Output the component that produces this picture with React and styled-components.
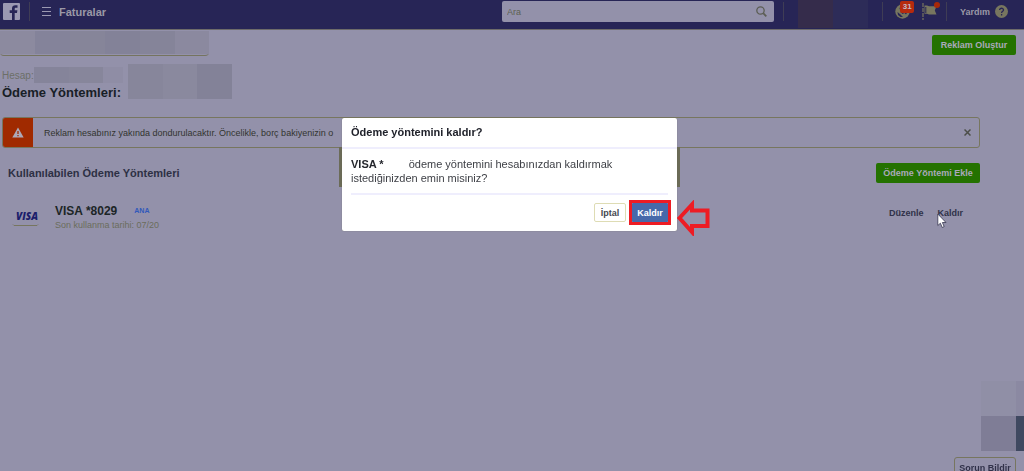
import React from "react";
import styled, { createGlobalStyle } from "styled-components";

const GlobalStyle = createGlobalStyle`
  * {
    box-sizing: border-box;
  }
  body {
    margin: 0;
    background-color: #9391aa;
    color: #2d3142;
    font-family: "Liberation Sans", Arial, sans-serif;
    font-size: 10px;
    overflow: hidden;
  }
  button, input {
    font-family: inherit;
  }
`;

const Page = styled.div`
  min-height: 100vh;
`;
const Navbar = styled.header`
  display: flex;
  align-items: center;
  height: 30px;
  padding: 0 16px 6px 3px;
  background-color: #272556;
  border-bottom: 1px solid #6d6b6a;
`;
const NavLeft = styled.div`
  flex: 1;
  display: flex;
  align-items: center;
`;
const Divider = styled.span`
  width: 1px;
  height: 19px;
  margin: 0 ${(props) => props.$right}px 0 ${(props) => props.$left}px;
  background-color: #3f3d55;
`;
const MenuButton = styled.button`
  display: flex;
  align-items: center;
  gap: 8px;
  padding: 0;
  border: none;
  background: none;
  color: #9b99a6;
  font-size: 11px;
  font-weight: bold;
`;
const SearchBox = styled.label`
  display: flex;
  align-items: center;
  width: 272px;
  height: 21px;
  padding: 0 7px 0 5px;
  border-radius: 2px;
  background-color: #9391aa;
`;
const SearchInput = styled.input`
  flex: 1;
  min-width: 0;
  padding: 0;
  border: none;
  outline: none;
  background: none;
  font-size: 9px;
  &::placeholder {
    color: #5d6151;
    opacity: 1;
  }
`;
const NavRight = styled.div`
  display: flex;
  align-items: center;
  width: 234px;
`;
const Mosaic = styled.div`
  display: flex;
  flex-wrap: wrap;
  width: ${(props) => props.$width}px;
  height: ${(props) => props.$height}px;
`;
const Tile = styled.span`
  flex: ${(props) => props.$size || 1} 1 0;
  background-color: ${(props) => props.$color};
`;
const ProfileArea = styled.div`
  align-self: flex-start;
  height: 24px;
`;
const IconLink = styled.a`
  position: relative;
  display: flex;
  margin-right: ${(props) => props.$gap || 0}px;
`;
const Badge = styled.span`
  position: absolute;
  top: -3px;
  left: 5px;
  width: 14px;
  height: 12px;
  border-radius: 2px;
  background-color: #b62a0d;
  color: #c6b9c6;
  font-size: 8px;
  font-weight: bold;
  line-height: 12px;
  text-align: center;
`;
const Dot = styled.span`
  position: absolute;
  top: -1px;
  right: -3px;
  width: 6px;
  height: 6px;
  border-radius: 50%;
  background-color: #a82808;
`;
const HelpLink = styled.a`
  display: flex;
  align-items: center;
  gap: 5px;
  color: #9b99a6;
  font-size: 9px;
  font-weight: bold;
  text-decoration: none;
`;
const Toolbar = styled.div`
  display: flex;
  justify-content: space-between;
  align-items: flex-start;
  height: 34px;
  padding-right: 8px;
`;
const AccountBox = styled.div`
  padding: 1px 0;
  border-bottom: 1px solid #75745f;
  border-radius: 0 0 4px 4px;
`;
const GreenButton = styled.button`
  height: 20px;
  margin-top: ${(props) => props.$top || 0}px;
  padding: 0;
  width: ${(props) => props.$width}px;
  border: none;
  border-radius: 2px;
  background-color: #247200;
  color: #aaa9bb;
  font-size: 9px;
  font-weight: bold;
  white-space: nowrap;
`;
const TitleBar = styled.div`
  display: flex;
  height: 53px;
  padding-left: 2px;
`;
const TitleText = styled.div`
  width: 126px;
  padding-top: 3px;
`;
const Account = styled.div`
  display: flex;
  align-items: center;
  height: 16px;
  color: #6c6f67;
`;
const Title = styled.h1`
  margin: 2px 0 0;
  color: #182026;
  font-size: 13px;
  line-height: 16px;
`;
const Content = styled.main`
  padding: 0 44px 0 2px;
`;
const Alert = styled.div`
  display: flex;
  align-items: center;
  height: 31px;
  border: 1px solid #77765f;
  border-radius: 3px;
  overflow: hidden;
`;
const AlertIcon = styled.div`
  display: flex;
  align-items: center;
  justify-content: center;
  width: 30px;
  height: 100%;
  background-color: #a02a00;
`;
const AlertText = styled.p`
  flex: 1;
  margin: 0 0 0 11px;
  color: #32342f;
  font-size: 9px;
`;
const CloseButton = styled.button`
  display: flex;
  margin-right: 8px;
  padding: 0;
  border: none;
  background: none;
`;
const SectionHead = styled.div`
  display: flex;
  justify-content: space-between;
  align-items: center;
  height: 20px;
  margin-top: 15px;
  padding-left: 6px;
`;
const SectionTitle = styled.h2`
  margin: 0;
  color: #2d3044;
  font-size: 11px;
`;
const MethodRow = styled.div`
  display: flex;
  align-items: center;
  margin-top: 20px;
  padding: 0 17px 0 10px;
`;
const MethodInfo = styled.div`
  flex: 1;
  margin-left: 16px;
`;
const MethodName = styled.div`
  display: flex;
  align-items: center;
  gap: 17px;
  color: #1c2526;
  font-size: 12px;
  font-weight: bold;
  line-height: 16px;
`;
const Primary = styled.span`
  color: #3159bb;
  font-size: 7px;
`;
const Expiry = styled.div`
  color: #6b6d5c;
  font-size: 9px;
  line-height: 12px;
`;
const Actions = styled.div`
  display: flex;
  gap: 14px;
  margin-bottom: 8px;
`;
const Action = styled.a`
  position: relative;
  color: #303149;
  font-size: 9px;
  font-weight: bold;
  text-decoration: none;
`;
const Pointer = styled.svg`
  position: absolute;
  top: 5px;
  left: 0;
`;
const Dock = styled.div`
  position: fixed;
  right: 0;
  bottom: -7px;
  display: flex;
  flex-direction: column;
  align-items: flex-end;
`;
const ReportButton = styled.button`
  width: 62px;
  height: 21px;
  margin: 6px 8px 0 0;
  padding: 0;
  border: 1px solid #77765f;
  border-radius: 3px;
  background: none;
  color: #303149;
  font-size: 9px;
  font-weight: bold;
  white-space: nowrap;
`;
const Overlay = styled.div`
  position: fixed;
  inset: 0;
  display: flex;
  align-items: flex-start;
  justify-content: center;
  padding: 118px 5px 0 0;
`;
const Dialog = styled.section`
  position: relative;
  width: 335px;
  border-radius: 2px;
  background-color: #fff;
  box-shadow: 0 0 1px #6b6b57;
  &::before {
    content: "";
    position: absolute;
    z-index: -1;
    top: 29px;
    left: -3px;
    right: -3px;
    height: 40px;
    background-color: #6b6b57;
  }
`;
const DialogTitle = styled.h3`
  margin: 0;
  padding: 0 9px;
  border-bottom: 2px solid #efeefd;
  color: #20222b;
  font-size: 11px;
  line-height: 29px;
`;
const DialogText = styled.p`
  margin: 0 9px;
  padding: 8px 0;
  border-bottom: 2px solid #efeefd;
  color: #3d3f45;
  font-size: 11px;
  line-height: 14px;
`;
const CardName = styled.strong`
  margin-right: 22px;
  color: #24262c;
`;
const DialogFooter = styled.div`
  display: flex;
  justify-content: flex-end;
  gap: 5px;
  padding: 8px 8px 9px;
`;
const DialogButton = styled.button`
  position: relative;
  width: ${(props) => (props.$primary ? 38 : 32)}px;
  height: 19px;
  padding: 0;
  border: 1px solid ${(props) => (props.$primary ? "#4769aa" : "#dedcb4")};
  border-radius: 2px;
  background-color: ${(props) => (props.$primary ? "#4769aa" : "#fff")};
  color: ${(props) => (props.$primary ? "#fff" : "#45484f")};
  font-size: 9px;
  font-weight: bold;
`;
const Highlight = styled.span`
  position: absolute;
  inset: -4px -3px;
  border: 3px solid #ed1c24;
`;
const Arrow = styled.svg`
  position: absolute;
  left: 335px;
  bottom: -5px;
`;

const Logo = () => (
  <svg width="17" height="17" viewBox="0 0 17 17" role="img" aria-label="Facebook">
    <rect width="17" height="17" rx="1" fill="#9b99b2" />
    <path
      d="M9 17V10H6.7V7.3H9V5.5C9 3.2 10.4 2.2 12.3 2.2H14.5V4.8H13C12 4.8 11.7 5.2 11.7 6V7.3H14.4L14 10H11.7V17Z"
      fill="#272556"
    />
  </svg>
);

const App = () => {
  return (
    <Page>
      <GlobalStyle />
      <Navbar>
        <NavLeft>
          <Logo />
          <Divider $left={9} $right={12} />
          <MenuButton>
            <svg width="9" height="10" stroke="#9b99b2" strokeWidth="1">
              <path d="M0 .5H9M0 4.5H9M0 8.5H9" />
            </svg>
            Faturalar
          </MenuButton>
        </NavLeft>
        <SearchBox>
          <SearchInput type="text" placeholder="Ara" aria-label="Ara" />
          <svg width="11" height="11" viewBox="0 0 11 11" fill="none" stroke="#5c5e55">
            <circle cx="4.5" cy="4.5" r="3.7" strokeWidth="1.3" />
            <path d="M7.2 7.2L10.3 10.3" strokeWidth="1.8" />
          </svg>
        </SearchBox>
        <NavRight>
          <Divider $left={9} $right={14} />
          <ProfileArea>
            <Mosaic $width={70} $height={28}>
              <Tile $color="#352c4b" />
              <Tile $color="#2d2c58" />
            </Mosaic>
          </ProfileArea>
          <Divider $left={14} $right={13} />
          <IconLink href="#notifications" aria-label="31 bildirim" $gap={12}>
            <svg width="15" height="15" viewBox="0 0 15 15">
              <circle cx="7.5" cy="7.5" r="7.2" fill="#77765f" />
              <path
                d="M5 3L9 2L12 5L12.5 8L11 10.5L9.5 9L7.5 10L5.5 8L6.5 6L4.5 5ZM2.5 8L5.5 10.5L8 13L5.5 13L3 11Z"
                fill="#272556"
              />
            </svg>
            <Badge>31</Badge>
          </IconLink>
          <IconLink href="#pages" aria-label="Sayfalar" $gap={9}>
            <svg width="15" height="17" viewBox="0 0 15 17">
              <path d="M1 0V17" stroke="#77765f" strokeWidth="1.2" strokeDasharray="4 1" />
              <path d="M2.5 2.5H5L7 3.2H14.5L12.8 7.5L14.5 11.5H7L5 10.8H2.5Z" fill="#77765f" />
              <path d="M3.8 4V10" stroke="#272556" strokeWidth="1" />
            </svg>
            <Dot />
          </IconLink>
          <Divider $left={0} $right={13} />
          <HelpLink href="#help">
            Yardım
            <svg width="13" height="13" viewBox="0 0 13 13">
              <circle cx="6.5" cy="6.5" r="6.5" fill="#77765f" />
              <path
                d="M4.6 5C4.6 2.6 8.5 2.7 8.5 4.9C8.5 6.3 6.6 6.3 6.6 7.9M6.6 9V10.4"
                fill="none"
                stroke="#272556"
                strokeWidth="1.3"
              />
            </svg>
          </HelpLink>
        </NavRight>
      </Navbar>

      <Toolbar>
        <AccountBox>
          <Mosaic $width={209} $height={23}>
            <Tile $size={35} $color="#8c8a9f" />
            <Tile $size={35} $color="#84839a" />
            <Tile $size={35} $color="#868599" />
            <Tile $size={35} $color="#838298" />
            <Tile $size={35} $color="#858499" />
            <Tile $size={34} $color="#8b899f" />
          </Mosaic>
        </AccountBox>
        <GreenButton $width={84} $top={5}>Reklam Oluştur</GreenButton>
      </Toolbar>

      <TitleBar>
        <TitleText>
          <Account>
            Hesap:
            <Mosaic $width={89} $height={16}>
              <Tile $size={35} $color="#85849a" />
              <Tile $size={34} $color="#87869b" />
              <Tile $size={20} $color="#8f8da5" />
            </Mosaic>
          </Account>
          <Title>Ödeme Yöntemleri:</Title>
        </TitleText>
        <Mosaic $width={104} $height={35}>
          <Tile $color="#87869b" />
          <Tile $color="#8a899e" />
          <Tile $color="#838298" />
        </Mosaic>
      </TitleBar>

      <Content>
        <Alert role="alert">
          <AlertIcon>
            <svg width="12" height="11" viewBox="0 0 12 11">
              <path d="M6 .5L11.7 10.5H.3Z" fill="#aca9b8" />
              <path d="M6 4V7M6 8V9.3" stroke="#a02a00" strokeWidth="1.3" />
            </svg>
          </AlertIcon>
          <AlertText>
            Reklam hesabınız yakında dondurulacaktır. Öncelikle, borç bakiyenizin o
          </AlertText>
          <CloseButton aria-label="Kapat">
            <svg width="7" height="7" viewBox="0 0 7 7" stroke="#4c4e48" strokeWidth="1.5">
              <path d="M.5 .5L6.5 6.5M6.5 .5L.5 6.5" />
            </svg>
          </CloseButton>
        </Alert>

        <SectionHead>
          <SectionTitle>Kullanılabilen Ödeme Yöntemleri</SectionTitle>
          <GreenButton $width={104}>Ödeme Yöntemi Ekle</GreenButton>
        </SectionHead>

        <MethodRow>
          <svg width="27" height="18" viewBox="0 0 27 18">
            <text
              x="4"
              y="12"
              fill="#1b1d6b"
              fontFamily="Open Sans, sans-serif"
              fontSize="10"
              fontStyle="italic"
              fontWeight="800"
            >
              VISA
            </text>
            <path d="M1 16.5L2 17.5H25L26 16.5" fill="none" stroke="#77765f" />
          </svg>
          <MethodInfo>
            <MethodName>
              VISA *8029 <Primary>ANA</Primary>
            </MethodName>
            <Expiry>Son kullanma tarihi: 07/20</Expiry>
          </MethodInfo>
          <Actions>
            <Action href="#edit">Düzenle</Action>
            <Action href="#remove">
              Kaldır
              <Pointer width="10" height="16" viewBox="0 0 10 16">
                <path
                  d="M.8 1V12.5L3.4 10.2L5.2 14.5L7.2 13.6L5.4 9.5H9Z"
                  fill="#fff"
                  stroke="#44445c"
                  strokeWidth=".9"
                />
              </Pointer>
            </Action>
          </Actions>
        </MethodRow>
      </Content>

      <Dock>
        <Mosaic $width={43} $height={35}>
          <Tile $size={35} $color="#908fa6" />
          <Tile $size={8} $color="#8b89a2" />
        </Mosaic>
        <Mosaic $width={43} $height={35}>
          <Tile $size={35} $color="#7f7d96" />
          <Tile $size={8} $color="#3f4860" />
        </Mosaic>
        <ReportButton>Sorun Bildir</ReportButton>
      </Dock>

      <Overlay>
        <Dialog role="dialog" aria-labelledby="dialog-title">
          <DialogTitle id="dialog-title">Ödeme yöntemini kaldır?</DialogTitle>
          <DialogText>
            <CardName>VISA *</CardName>
            {" "}ödeme yöntemini hesabınızdan kaldırmak istediğinizden emin misiniz?
          </DialogText>
          <DialogFooter>
            <DialogButton>İptal</DialogButton>
            <DialogButton $primary>
              Kaldır
              <Highlight />
            </DialogButton>
          </DialogFooter>
          <Arrow width="33" height="36" viewBox="0 0 33 36">
            <path
              d="M2.5 18L15 4.5V10.5H30.5V26H15V32L2.5 18Z"
              fill="none"
              stroke="#ed1c24"
              strokeWidth="4"
            />
          </Arrow>
        </Dialog>
      </Overlay>
    </Page>
  );
};

export default App;
